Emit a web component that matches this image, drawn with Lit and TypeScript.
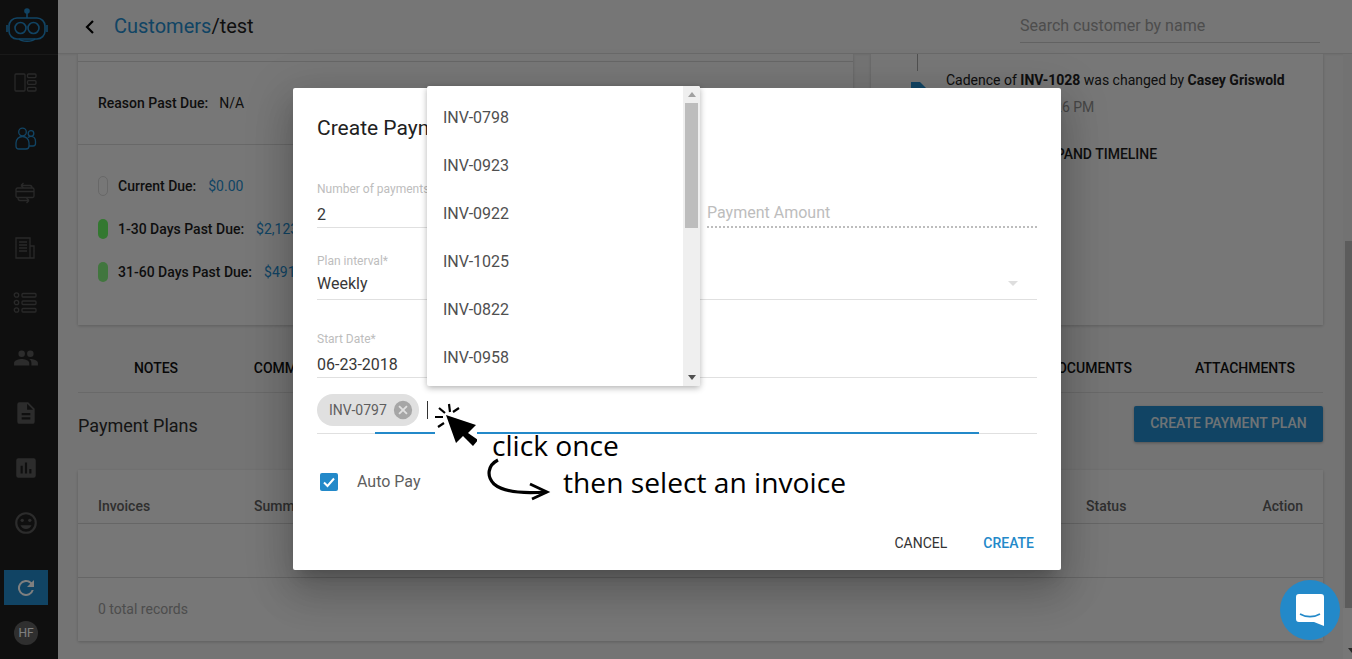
import { LitElement, html, css, svg } from "lit";
import { customElement } from "lit/decorators.js";

const INVOICES = ["INV-0798", "INV-0923", "INV-0922", "INV-1025", "INV-0822", "INV-0958"];
const TABS: [string, number][] = [["NOTES", 156], ["COMMUNICATIONS", 316], ["DOCUMENTS", 1090], ["ATTACHMENTS", 1245]];

const navIcons = [
  svg`<rect x="2" y="3" width="10" height="17" rx="1"/><rect x="14.500" y="3" width="8.500" height="3.600" rx="1"/><rect x="14.500" y="9.700" width="8.500" height="3.600" rx="1"/><rect x="14.500" y="16.400" width="8.500" height="3.600" rx="1"/>`,
  svg`<circle cx="9.500" cy="6" r="3.800"/><circle cx="18" cy="7.500" r="2.800"/><path d="M3 20c0-1 0-2 0-3 0-4 3-6.500 6.500-6.500S16 13 16 17v3c0 2-1 3-3 3H6c-2 0-3-1-3-3zM15 11.500c1-.8 2-1.200 3-1.200 2.500 0 4.500 2 4.500 5v2.200c0 1.500-1 2.500-2.500 2.500h-4"/>`,
  svg`<rect x="3" y="7" width="18" height="9.500" rx="1.500"/><path d="M3 10.500h18M8 4.500h9c1 0 2 1 2 2.500M8 4.500l2.500-2.500M8 4.500l2.500 2.500M16 19.500H7c-1 0-2-1-2-3M16 19.500l-2.500-2.500M16 19.500l-2.500 2.500"/>`,
  svg`<path d="M3 2h14v20H3zM17 10h4v12H3M6 6h8M6 9h8M6 12h8M6 15h8"/>`,
  svg`<circle cx="3.500" cy="4" r="2.200"/><circle cx="3.500" cy="11.500" r="2.200"/><circle cx="3.500" cy="19" r="2.200"/><rect x="9" y="2.500" width="14" height="3.500" rx="1"/><rect x="9" y="10" width="14" height="3.500" rx="1"/><rect x="9" y="17.500" width="14" height="3.500" rx="1"/>`,
];

@customElement("app-root")
export class AppRoot extends LitElement {
  static styles = css`
    :host { display: block; position: relative; width: 1352px; height: 659px; overflow: hidden; font-family: Roboto, "Liberation Sans", sans-serif; color: #212121; background: #e9e9e9; }
    * { box-sizing: border-box; }
    .shell { display: flex; height: 659px; }
    .side { width: 58px; flex: none; background: #1f1f1f; display: flex; flex-direction: column; padding-right: 6px; }
    .logo { width: 58px; height: 55px; border-bottom: 1px solid #333; padding-left: 6px; padding-top: 7px; }
    .logo svg { display: block; }
    .nav { display: flex; flex-direction: column; }
    .nav-item { height: 55px; width: 52px; display: flex; align-items: center; justify-content: center; padding-right: 3px; }
    .nav-item svg { width: 24px; height: 24px; fill: none; stroke: #525252; stroke-width: 1.300; }
    .nav-item.active svg { stroke: #2389c9; }
    .nav-solid { height: 55px; width: 52px; display: flex; align-items: center; justify-content: center; }
    .nav-solid svg { width: 26px; height: 26px; fill: #585858; }
    .side-foot { margin-top: auto; display: flex; flex-direction: column; align-items: center; gap: 16px; padding-bottom: 14px; }
    .refresh { width: 44px; height: 35px; background: #2389c9; display: flex; align-items: center; justify-content: center; }
    .refresh svg { width: 24px; height: 24px; fill: #fff; }
    .avatar { width: 24px; height: 24px; border-radius: 50%; background: #5f5f5f; color: #fff; font-size: 12px; display: flex; align-items: center; justify-content: center; }
    .main { flex: 1; min-width: 0; display: flex; flex-direction: column; }
    .top { height: 54px; flex: none; background: #ececec; border-bottom: 1px solid #d2d2d2; display: flex; align-items: center; padding: 0 32px 0 22px; box-shadow: 0 1px 2px rgba(0,0,0,.06); }
    .back { width: 20px; height: 20px; fill: none; stroke: #000; stroke-width: 2.200; margin-right: 14px; }
    .crumb { font-size: 20px; color: #1d1d1d; margin-top: -2px; }
    .crumb a { color: #2389c9; }
    .search { margin-left: auto; width: 300px; height: 32px; border-bottom: 1px solid #c4c4c4; color: #9a9a9a; font-size: 16px; line-height: 24px; padding-top: 3px; }
    .body { flex: 1; min-height: 0; display: flex; }
    .scroll { flex: 1; min-width: 0; padding: 0 20px; overflow: hidden; }
    .bar { width: 9px; flex: none; background: #e4e4e4; display: flex; flex-direction: column; overflow: hidden; }
    .bar-track { padding: 187px 0 0 2px; }
    .bar-thumb { height: 367px; background: #b8b8b8; }
    .bar-rest { flex: 1; background: #efefef; }
    .bar-end { height: 17px; width: 17px; flex: none; background: #efefef; display: flex; align-items: center; justify-content: center; }
    .tri { width: 0; height: 0; border-left: 4px solid transparent; border-right: 4px solid transparent; border-top: 5px solid #505050; }
    .cols { display: grid; grid-template-columns: 775px 452px; column-gap: 18px; height: 271px; }
    .card { background: #eeeeee; box-shadow: 0 1px 3px rgba(0,0,0,.2); }
    .left-strip { height: 8px; border-bottom: 1px solid #cfcfcf; }
    .reason { height: 83px; border-bottom: 1px solid #d0d0d0; display: flex; align-items: center; gap: 11px; padding-left: 20px; font-size: 14px; }
    .label { font-weight: 500; color: #1d1d1d; }
    .aging { padding: 31px 20px 0; display: flex; flex-direction: column; gap: 23px; }
    .aging-row { display: flex; align-items: center; height: 20px; font-size: 14px; }
    .dot { width: 10px; height: 20px; border-radius: 5px; margin-right: 10px; }
    .dot.empty { border: 1px solid #d0d0d0; }
    .dot.g1 { background: #66f060; }
    .dot.g2 { background: #82ec7c; }
    .money { color: #2389c9; margin-left: 12px; font-size: 14px; }
    .timeline { position: relative; padding: 18px 0 0 75px; font-size: 14px; line-height: 16px; }
    .tl-line { position: absolute; left: 46px; top: 0; width: 1px; height: 17px; background: #a0a0a0; }
    .tl-icon { position: absolute; left: 39px; top: 28px; width: 16px; height: 20px; fill: #2389c9; }
    .tl-meta { color: #8c8c8c; margin-top: 11px; height: 16px; padding-left: 7px; }
    .expand { font-weight: 500; font-size: 14px; margin-top: 31px; padding-left: 93px; color: #1d1d1d; }
    .tabs { position: relative; height: 68px; border-bottom: 1px solid #d2d2d2; }
    .tab { position: absolute; top: 35px; transform: translateX(-50%); font-size: 14px; font-weight: 500; color: #111; white-space: nowrap; }
    .plans { display: flex; align-items: center; justify-content: space-between; height: 78px; padding-bottom: 16px; }
    .plans h2 { font-weight: 400; font-size: 18px; margin: 2px 0 0; color: #2a2a2a; }
    .cta { height: 36px; width: 189px; padding-bottom: 2px; background: #2389c9; border-radius: 2px; font-size: 14px; font-weight: 500; display: flex; align-items: center; justify-content: center; box-shadow: 0 1px 3px rgba(0,0,0,.3); color: #dfe7ec; }
    .table { margin-top: -1px; height: 171px; }
    .thead { height: 54px; border-bottom: 1px solid #cdcdcd; position: relative; font-size: 14px; font-weight: 500; color: #5e5e5e; }
    .thead span { position: absolute; top: 28px; }
    .trow { height: 54px; border-bottom: 1px solid #cdcdcd; }
    .tfoot { padding: 23px 20px; font-size: 14px; color: #9a9a9a; }
    .overlay { position: absolute; inset: 0; background: rgba(0,0,0,.5); }
    .modal { position: absolute; left: 293px; top: 88px; width: 768px; height: 482px; background: #fff; border-radius: 2px; box-shadow: 0 11px 15px -7px rgba(0,0,0,.2), 0 24px 38px 3px rgba(0,0,0,.14), 0 9px 46px 8px rgba(0,0,0,.12); padding: 0 24px; display: flex; flex-direction: column; }
    .modal h3 { margin: 26px 0 0; font-size: 21px; line-height: 28px; font-weight: 400; color: #212121; height: 28px; }
    .f-row { display: grid; grid-template-columns: 320px 330px; justify-content: space-between; margin-top: 39px; }
    .field { display: flex; flex-direction: column; }
    .f-label { font-size: 12px; color: #bdbdbd; height: 16px; line-height: 16px; }
    .f-value { font-size: 16px; color: #383838; height: 24px; line-height: 24px; }
    .f-line { height: 1px; background: #e0e0e0; }
    .num .f-value { margin-top: 6px; }
    .amount { padding-top: 20px; }
    .amount .f-value { color: #bdbdbd; }
    .dotted { border-top: 2px dotted #bdbdbd; margin-top: 1px; }
    .plan { margin-top: 25px; position: relative; }
    .plan .f-value { margin-top: 3px; }
    .plan .f-line { margin-top: 3px; }
    .select-tri { position: absolute; right: 19px; top: 28px; width: 0; height: 0; border-left: 5px solid transparent; border-right: 5px solid transparent; border-top: 5px solid #dedede; }
    .date { margin-top: 31px; }
    .date .f-value { margin-top: 6px; }
    .chips { height: 56px; display: flex; align-items: flex-start; padding-top: 16px; position: relative; border-bottom: 1px solid #e0e0e0; }
    .chips-focus { position: absolute; left: 58px; bottom: -1px; width: 604px; height: 2px; background: #2389c9; }
    .chip { height: 32px; width: 102px; border-radius: 16px; background: #e0e0e0; font-size: 14px; color: #5e5e5e; display: flex; align-items: center; padding-left: 12px; }
    .chip svg { width: 22px; height: 22px; margin-left: 5px; fill: #a6a6a6; }
    .caret { width: 1px; height: 18px; background: #333; margin: 7px 0 0 8px; }
    .auto { display: flex; align-items: center; margin-top: 36px; height: 24px; padding-left: 3px; font-size: 16px; color: #5f5f5f; }
    .auto span { margin-top: -2px; }
    .check { width: 18px; height: 18px; border-radius: 2px; background: #2389c9; margin-right: 19px; }
    .check svg { display: block; width: 18px; height: 18px; fill: none; stroke: #fff; stroke-width: 2; }
    .actions { margin-top: auto; height: 54px; display: flex; justify-content: flex-end; align-items: center; gap: 36px; padding: 0 3px 0 0; font-size: 14px; font-weight: 500; }
    .cancel { color: #333; font-weight: 400; }
    .create { color: #2389c9; }
    .menu { position: absolute; left: 427px; top: 86px; width: 273px; height: 300px; background: #fff; border-radius: 2px; box-shadow: 0 2px 6px rgba(0,0,0,.3); display: flex; overflow: hidden; }
    .items { flex: 1; padding-top: 8px; }
    .item { height: 48px; padding-left: 16px; font-size: 16px; line-height: 48px; color: #4f4f4f; }
    .m-bar { width: 17px; background: #efefef; display: flex; flex-direction: column; align-items: center; }
    .m-end { height: 17px; flex: none; display: flex; align-items: center; justify-content: center; }
    .m-thumb { height: 125px; width: 13px; background: #bdbdbd; }
    .m-gap { flex: 1; }
    .t-up { width: 0; height: 0; border-left: 4px solid transparent; border-right: 4px solid transparent; border-bottom: 5px solid #a0a0a0; }
    .t-down { width: 0; height: 0; border-left: 4px solid transparent; border-right: 4px solid transparent; border-top: 5px solid #505050; }
    .note { position: absolute; font-family: "Open Sans", "Noto Sans", sans-serif; color: #000; font-size: 28.200px; line-height: 36px; white-space: nowrap; }
    .n1 { left: 492px; top: 427px; }
    .n2 { left: 563px; top: 464px; }
    .pointer { position: absolute; left: 435px; top: 403px; width: 42px; height: 46px; }
    .curve { position: absolute; left: 484px; top: 456px; width: 68px; height: 46px; }
    .chat { position: absolute; left: 1280px; top: 580px; width: 60px; height: 60px; border-radius: 50%; background: #2389c9; display: flex; align-items: center; justify-content: center; }
    .chat svg { width: 28px; height: 32px; }
  `;

  render() {
    return html`
      <div class="shell">
        <aside class="side">
          <div class="logo">
            <svg width="42" height="38" viewBox="0 0 42 38" fill="none" stroke="#2389c9" stroke-width="1.600">
              <circle cx="21" cy="4" r="2" fill="#2389c9"/>
              <path d="M21 6v5"/>
              <rect x="3" y="11" width="36" height="21" rx="8"/>
              <circle cx="14.500" cy="21" r="5.500"/>
              <circle cx="27.500" cy="21" r="5.500"/>
              <path d="M1 18v7M41 18v7M13 32c3 3 13 3 16 0"/>
            </svg>
          </div>
          <div class="nav">
            ${navIcons.map((p, i) => html`<div class="nav-item ${i === 1 ? "active" : ""}"><svg viewBox="0 0 24 24">${p}</svg></div>`)}
            <div class="nav-solid"><svg viewBox="0 0 24 24"><path d="M16 11a3 3 0 1 0 0-6 3 3 0 0 0 0 6zM8 11a3 3 0 1 0 0-6 3 3 0 0 0 0 6zM8 13c-2.300 0-7 1.200-7 3.500V19h14v-2.500C15 14.200 10.300 13 8 13zM16 13h-1c1.200.8 2 2 2 3.500V19h6v-2.500c0-2.300-4.700-3.500-7-3.500z"/></svg></div>
            <div class="nav-solid"><svg viewBox="0 0 24 24"><path d="M14 2H6a2 2 0 0 0-2 2v16a2 2 0 0 0 2 2h12a2 2 0 0 0 2-2V8zM16 18H8v-2h8zM16 14H8v-2h8zM13 9V3.500L18.500 9z"/></svg></div>
            <div class="nav-solid"><svg viewBox="0 0 24 24"><path fill-rule="evenodd" d="M5 3h14a2 2 0 0 1 2 2v14a2 2 0 0 1-2 2H5a2 2 0 0 1-2-2V5a2 2 0 0 1 2-2zM7 10v7h2v-7zM11 7v10h2V7zM15 13v4h2v-4z"/></svg></div>
            <div class="nav-solid"><svg viewBox="0 0 24 24"><path d="M12 2a10 10 0 1 0 0 20 10 10 0 0 0 0-20zm0 18a8 8 0 1 1 0-16 8 8 0 0 1 0 16z"/><circle cx="15.500" cy="9.500" r="1.500"/><circle cx="8.500" cy="9.500" r="1.500"/><path d="M12 17.500c2.300 0 4.300-1.500 5.100-3.500H6.900c.8 2 2.800 3.500 5.100 3.500z"/></svg></div>
          </div>
          <div class="side-foot">
            <div class="refresh"><svg viewBox="0 0 24 24"><path d="M17.650 6.350A8 8 0 1 0 19.730 14h-2.080A6 6 0 1 1 12 6c1.660 0 3.140.69 4.220 1.780L13 11h7V4z"/></svg></div>
            <div class="avatar">HF</div>
          </div>
        </aside>
        <div class="main">
          <header class="top">
            <svg class="back" viewBox="0 0 20 20"><path d="M13 4l-6 6 6 6"/></svg>
            <div class="crumb"><a>Customers</a>/test</div>
            <div class="search">Search customer by name</div>
          </header>
          <div class="body">
            <div class="scroll">
              <div class="cols">
                <section class="card">
                  <div class="left-strip"></div>
                  <div class="reason"><span class="label">Reason Past Due:</span><span>N/A</span></div>
                  <div class="aging">
                    <div class="aging-row"><span class="dot empty"></span><span class="label">Current Due:</span><span class="money">$0.00</span></div>
                    <div class="aging-row"><span class="dot g1"></span><span class="label">1-30 Days Past Due:</span><span class="money">$2,123.00</span></div>
                    <div class="aging-row"><span class="dot g2"></span><span class="label">31-60 Days Past Due:</span><span class="money">$491.00</span></div>
                  </div>
                </section>
                <section class="card timeline">
                  <div class="tl-line"></div>
                  <svg class="tl-icon" viewBox="0 0 16 20"><path d="M1 0h9l6 6v14H1z"/></svg>
                  <div>Cadence of <b>INV-1028</b> was changed by <b>Casey Griswold</b></div>
                  <div class="tl-meta">06-23-2018 at 5:26 PM</div>
                  <div class="expand">EXPAND TIMELINE</div>
                </section>
              </div>
              <div class="tabs">
                ${TABS.map(([t, x]) => html`<span class="tab" style="left:${x - 78}px">${t}</span>`)}
              </div>
              <div class="plans">
                <h2>Payment Plans</h2>
                <div class="cta">CREATE PAYMENT PLAN</div>
              </div>
              <section class="card table">
                <div class="thead">
                  <span style="left:20px">Invoices</span>
                  <span style="left:176px">Summary</span>
                  <span style="left:1008px">Status</span>
                  <span style="right:20px">Action</span>
                </div>
                <div class="trow"></div>
                <div class="tfoot">0 total records</div>
              </section>
            </div>
            <div class="bar">
              <div class="bar-track"><div class="bar-thumb"></div></div>
              <div class="bar-rest"></div>
              <div class="bar-end"><div class="tri"></div></div>
            </div>
          </div>
        </div>
      </div>
      <div class="overlay"></div>
      <div class="modal">
        <h3>Create Payment Plan</h3>
        <div class="f-row">
          <div class="field num">
            <span class="f-label">Number of payments*</span>
            <span class="f-value">2</span>
            <div class="f-line"></div>
          </div>
          <div class="field amount">
            <span class="f-value">Payment Amount</span>
            <div class="dotted"></div>
          </div>
        </div>
        <div class="field plan">
          <span class="f-label">Plan interval*</span>
          <span class="f-value">Weekly</span>
          <div class="f-line"></div>
          <div class="select-tri"></div>
        </div>
        <div class="field date">
          <span class="f-label">Start Date*</span>
          <span class="f-value">06-23-2018</span>
          <div class="f-line"></div>
        </div>
        <div class="chips">
          <div class="chip">INV-0797<svg viewBox="0 0 24 24"><path d="M12 2a10 10 0 1 0 0 20 10 10 0 0 0 0-20zm5 13.590L15.590 17 12 13.410 8.410 17 7 15.590 10.590 12 7 8.410 8.410 7 12 10.590 15.590 7 17 8.410 13.410 12z"/></svg></div>
          <div class="caret"></div>
          <div class="chips-focus"></div>
        </div>
        <div class="auto">
          <div class="check"><svg viewBox="0 0 18 18"><path d="M4 9.500l3.500 3.500L14 5.500"/></svg></div>
          <span>Auto Pay</span>
        </div>
        <div class="actions"><span class="cancel">CANCEL</span><span class="create">CREATE</span></div>
      </div>
      <div class="menu">
        <div class="items">${INVOICES.map((i) => html`<div class="item">${i}</div>`)}</div>
        <div class="m-bar">
          <div class="m-end"><div class="t-up"></div></div>
          <div class="m-thumb"></div>
          <div class="m-gap"></div>
          <div class="m-end"><div class="t-down"></div></div>
        </div>
      </div>
      <svg class="pointer" viewBox="435 403 42 46">
        <rect x="435" y="403" width="42" height="46" fill="#fff"/>
        <path d="M446 415L476 425L468 433L478 440L473 446L463 436L456 443z" fill="#000"/>
        <path d="M449 404l1 8M459 408l-6 4M439 408l6 5M435 417h8M438 427l6-4" stroke="#000" stroke-width="2.200" fill="none"/>
      </svg>
      <div class="note n1">click once</div>
      <svg class="curve" viewBox="484 456 68 46" fill="none" stroke="#000">
        <path d="M498 460C488 465 486 476 494 484C502 491 520 494 546 492" stroke-width="3.200"/>
        <path d="M530 484L547 492L532 499" stroke-width="2.800"/>
      </svg>
      <div class="note n2">then select an invoice</div>
      <div class="chat">
        <svg viewBox="0 0 28 32">
          <path d="M3 0h22a3 3 0 0 1 3 3v29l-10-4H3a3 3 0 0 1-3-3V3a3 3 0 0 1 3-3z" fill="#fff"/>
          <path d="M4 20c6 3.500 14 3.500 20 0" stroke="#2389c9" stroke-width="1.600" fill="none"/>
        </svg>
      </div>
    `;
  }
}
